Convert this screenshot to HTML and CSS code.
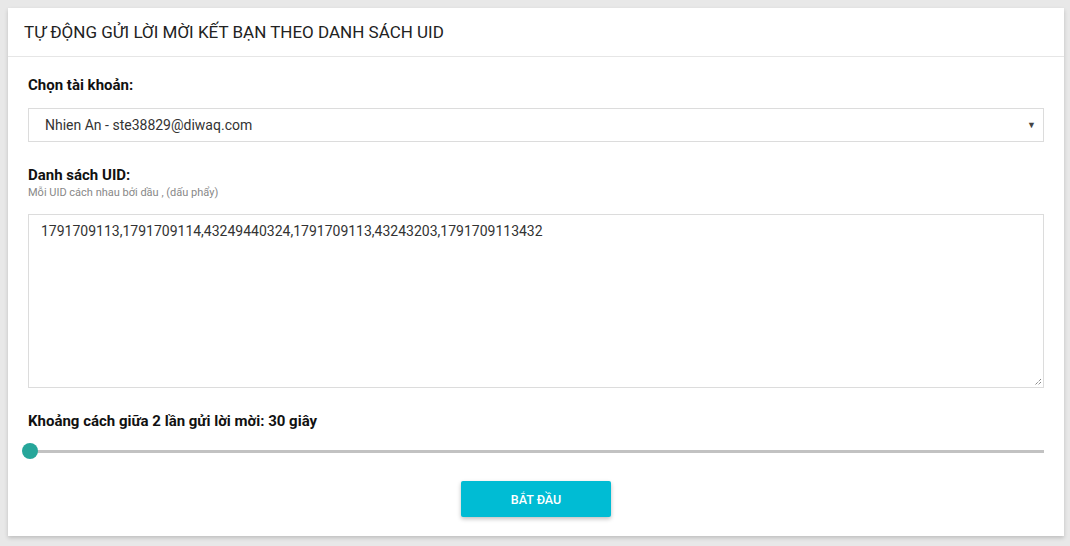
FILE: index.html
```html
<!DOCTYPE html>
<html lang="vi">
<head>
<meta charset="utf-8">
<link rel="stylesheet" href="styles.css">
</head>
<body>
<div class="card">
  <div class="card-header">TỰ ĐỘNG GỬI LỜI MỜI KẾT BẠN THEO DANH SÁCH UID</div>
  <div class="card-body">
    <div class="label">Chọn tài khoản:</div>
    <div class="select">
      <span>Nhien An - ste38829@diwaq.com</span>
      <span class="caret">▼</span>
    </div>
    <div class="label label-uid">Danh sách UID:</div>
    <div class="hint">Mỗi UID cách nhau bởi dầu , (dấu phẩy)</div>
    <div class="textarea">1791709113,1791709114,43249440324,1791709113,43243203,1791709113432
      <svg class="grip" width="8" height="8" viewBox="0 0 8 8"><path d="M7 1L1 7M7 4L4 7" stroke="#555" stroke-width="1" stroke-dasharray="1 1"/></svg>
    </div>
    <div class="label label-range">Khoảng cách giữa 2 lần gửi lời mời: 30 giây</div>
    <div class="range"><div class="track"></div><div class="thumb"></div></div>
    <div class="actions"><button class="btn">BẮT ĐẦU</button></div>
  </div>
</div>
</body>
</html>
```
FILE: styles.css
```css
* { box-sizing: border-box; }
html, body { margin: 0; }
body {
  background: #e8e8e8;
  padding: 8px 6px 10px 8px;
  font-family: Roboto, "Liberation Sans", sans-serif;
  color: #111;
}
.card {
  background: #fff;
  box-shadow: 0 2px 4px rgba(0,0,0,0.18);
  height: 528px;
}
.card-header {
  height: 49px;
  border-bottom: 1px solid #e6e6e6;
  padding: 14px 0 0 16px;
  font-size: 17px;
  line-height: 20px;
  color: #222;
}
.card-body {
  padding: 19px 20px 0 20px;
}
.label {
  font-size: 15px;
  font-weight: 700;
  line-height: 18px;
  color: #111;
}
.select {
  margin-top: 14px;
  height: 34px;
  border: 1px solid #dcdcdc;
  display: flex;
  align-items: center;
  justify-content: space-between;
  padding: 0 7px 0 16px;
  font-size: 14px;
  color: #333;
}
.caret { font-size: 9px; color: #444; }
.label-uid { margin-top: 24px; }
.hint {
  font-size: 11px;
  color: #888;
  line-height: 15px;
  margin-top: 1px;
}
.textarea {
  position: relative;
  margin-top: 14px;
  height: 174px;
  border: 1px solid #dcdcdc;
  padding: 8px 12px;
  font-size: 14px;
  color: #333;
  line-height: 16px;
}
.grip { position: absolute; right: 1px; bottom: 1px; }
.label-range { margin-top: 24px; }
.range {
  position: relative;
  margin-top: 13px;
  height: 16px;
  display: flex;
  align-items: center;
}
.track {
  width: 100%;
  height: 3px;
  background: #c2c2c2;
}
.thumb {
  position: absolute;
  left: -6px;
  top: 0;
  width: 16px;
  height: 16px;
  border-radius: 50%;
  background: #26a69a;
}
.actions {
  display: flex;
  justify-content: center;
  margin-top: 22px;
}
.btn {
  width: 150px;
  height: 36px;
  border: 0;
  border-radius: 2px;
  background: #00bcd4;
  color: #fff;
  font-family: Roboto, "Liberation Sans", sans-serif;
  font-size: 12.5px;
  font-weight: 500;
  box-shadow: 0 2px 4px rgba(0,0,0,0.25);
}
```
